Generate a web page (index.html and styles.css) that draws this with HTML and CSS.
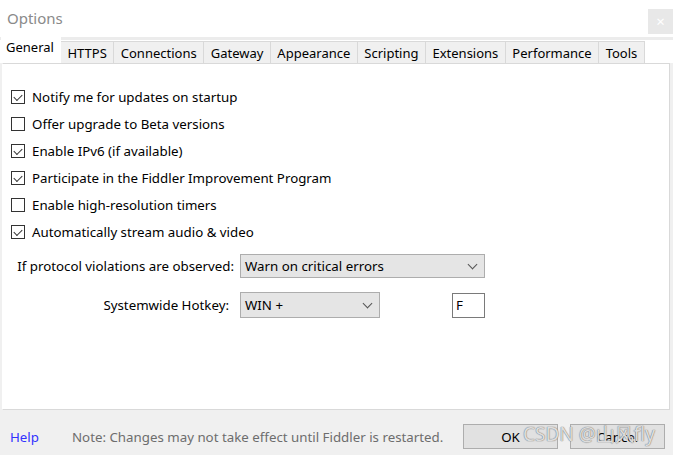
FILE: index.html
```html
<!DOCTYPE html>
<html lang="en">
<head>
  <meta charset="UTF-8" />
  <title>Options</title>
  <link rel="stylesheet" href="styles.css">
</head>
<body>
  <div class="window">
    <div class="titlebar">
      <span class="title">Options</span>
      <span class="close">&times;</span>
    </div>

    <div class="tabs">
      <span class="tab active">General</span>
      <span class="tab">HTTPS</span>
      <span class="tab">Connections</span>
      <span class="tab">Gateway</span>
      <span class="tab">Appearance</span>
      <span class="tab">Scripting</span>
      <span class="tab">Extensions</span>
      <span class="tab">Performance</span>
      <span class="tab">Tools</span>
    </div>

    <div class="panel">
      <label class="check"><span class="box on"></span>Notify me for updates on startup</label>
      <label class="check"><span class="box"></span>Offer upgrade to Beta versions</label>
      <label class="check"><span class="box on"></span>Enable IPv6 (if available)</label>
      <label class="check"><span class="box on"></span>Participate in the Fiddler Improvement Program</label>
      <label class="check"><span class="box"></span>Enable high-resolution timers</label>
      <label class="check"><span class="box on"></span>Automatically stream audio &amp; video</label>

      <div class="field protocol">
        <span class="field-label">If protocol violations are observed:</span>
        <div class="combo wide">Warn on critical errors<span class="arrow"></span></div>
      </div>

      <div class="field hotkey">
        <span class="field-label">Systemwide Hotkey:</span>
        <div class="combo narrow">WIN +<span class="arrow"></span></div>
        <div class="textbox">F</div>
      </div>
    </div>

    <div class="footer">
      <a class="help">Help</a>
      <span class="note">Note: Changes may not take effect until Fiddler is restarted.</span>
      <button class="btn">OK</button>
      <button class="btn last">Cancel</button>
      <span class="watermark">CSDN @山风fly</span>
    </div>
  </div>
</body>
</html>
```

FILE: styles.css
```css
body {
  margin: 0;
  font-family: "Noto Sans", "Open Sans", sans-serif;
  font-size: 13.3px;
  color: #000;
  background: #fff;
}
.window {
  position: relative;
  width: 673px;
  height: 455px;
  display: flex;
  flex-direction: column;
  background: #f0f0f0;
}
.titlebar {
  height: 37px;
  flex-shrink: 0;
  background: #fff;
  display: flex;
  align-items: center;
  justify-content: space-between;
  padding-left: 7px;
}
.title {
  font-size: 15px;
  color: #8a8a8a;
  margin-top: -1px;
}
.close {
  width: 25px;
  height: 25px;
  margin-top: 5px;
  background: #e8e8e8;
  color: #fff;
  display: flex;
  align-items: center;
  justify-content: center;
  font-size: 15px;
}
.tabs {
  display: flex;
  align-items: flex-end;
  height: 23px;
  flex-shrink: 0;
  padding: 0 0 0 2px;
  background: #fff;
  border-top: 3px solid #ececec;
  font-size: 13px;
}
.tab {
  height: 21px;
  padding: 0 6.5px;
  display: flex;
  align-items: center;
  background: #f0f0f0;
  border: 1px solid #d9d9d9;
  border-bottom: none;
  margin-left: -1px;
}
.tab.active {
  height: 26px;
  background: #fff;
  border-color: #fff;
  padding: 0 6px 3px 4px;
  position: relative;
  z-index: 1;
}
.panel {
  flex: 1;
  background: #fff;
  margin-left: 2px;
  margin-right: 3px;
  border: 1px solid #d9d9d9;
  border-left-color: #fff;
  padding: 19px 0 0 8px;
}
.check {
  display: flex;
  align-items: center;
  height: 27px;
}
.box {
  width: 12px;
  height: 12px;
  border: 1px solid #333;
  margin-right: 7px;
  position: relative;
  background: #fff;
}
.box.on::after {
  content: "";
  position: absolute;
  left: 2px;
  top: 0px;
  width: 7px;
  height: 4px;
  border-left: 1.3px solid #333;
  border-bottom: 1.3px solid #333;
  transform: translate(0, 3px) rotate(-45deg);
}
.field {
  display: flex;
  align-items: center;
}
.field-label {
  text-align: right;
  flex-shrink: 0;
}
.protocol {
  margin-top: 9px;
}
.protocol .field-label {
  width: 223px;
  margin-right: 6px;
}
.hotkey {
  margin-top: 14px;
}
.hotkey .field-label {
  width: 218px;
  margin-right: 11px;
}
.combo {
  height: 22px;
  background: #e5e5e5;
  border: 1px solid #adadad;
  display: flex;
  align-items: center;
  justify-content: space-between;
  padding: 0 8px 0 4px;
}
.combo.wide {
  width: 231px;
}
.combo.narrow {
  width: 126px;
  height: 24px;
}
.arrow {
  width: 6px;
  height: 6px;
  border-right: 1px solid #555;
  border-bottom: 1px solid #555;
  transform: rotate(45deg);
  margin-top: -4px;
}
.textbox {
  margin-left: 72px;
  width: 28px;
  height: 23px;
  background: #fff;
  border: 1px solid #7a7a7a;
  display: flex;
  align-items: center;
  padding-left: 3px;
}
.footer {
  height: 45px;
  flex-shrink: 0;
  display: flex;
  align-items: center;
  padding: 8px 0 0 10px;
  box-sizing: border-box;
}
.help {
  color: #3232ff;
  width: 62px;
  flex-shrink: 0;
}
.note {
  color: #6d6d6d;
  width: 391px;
  flex-shrink: 0;
}
.btn {
  font: inherit;
  width: 95px;
  height: 25px;
  flex-shrink: 0;
  background: #e1e1e1;
  border: 1px solid #adadad;
  margin-right: 12px;
}
.btn.last {
  margin-right: 0;
}
.watermark {
  position: absolute;
  left: 523px;
  top: 421px;
  font-size: 19px;
  color: rgba(255, 255, 255, 0.75);
  text-shadow: 0 0 1px #777, 0 0 1px #777;
}
```
